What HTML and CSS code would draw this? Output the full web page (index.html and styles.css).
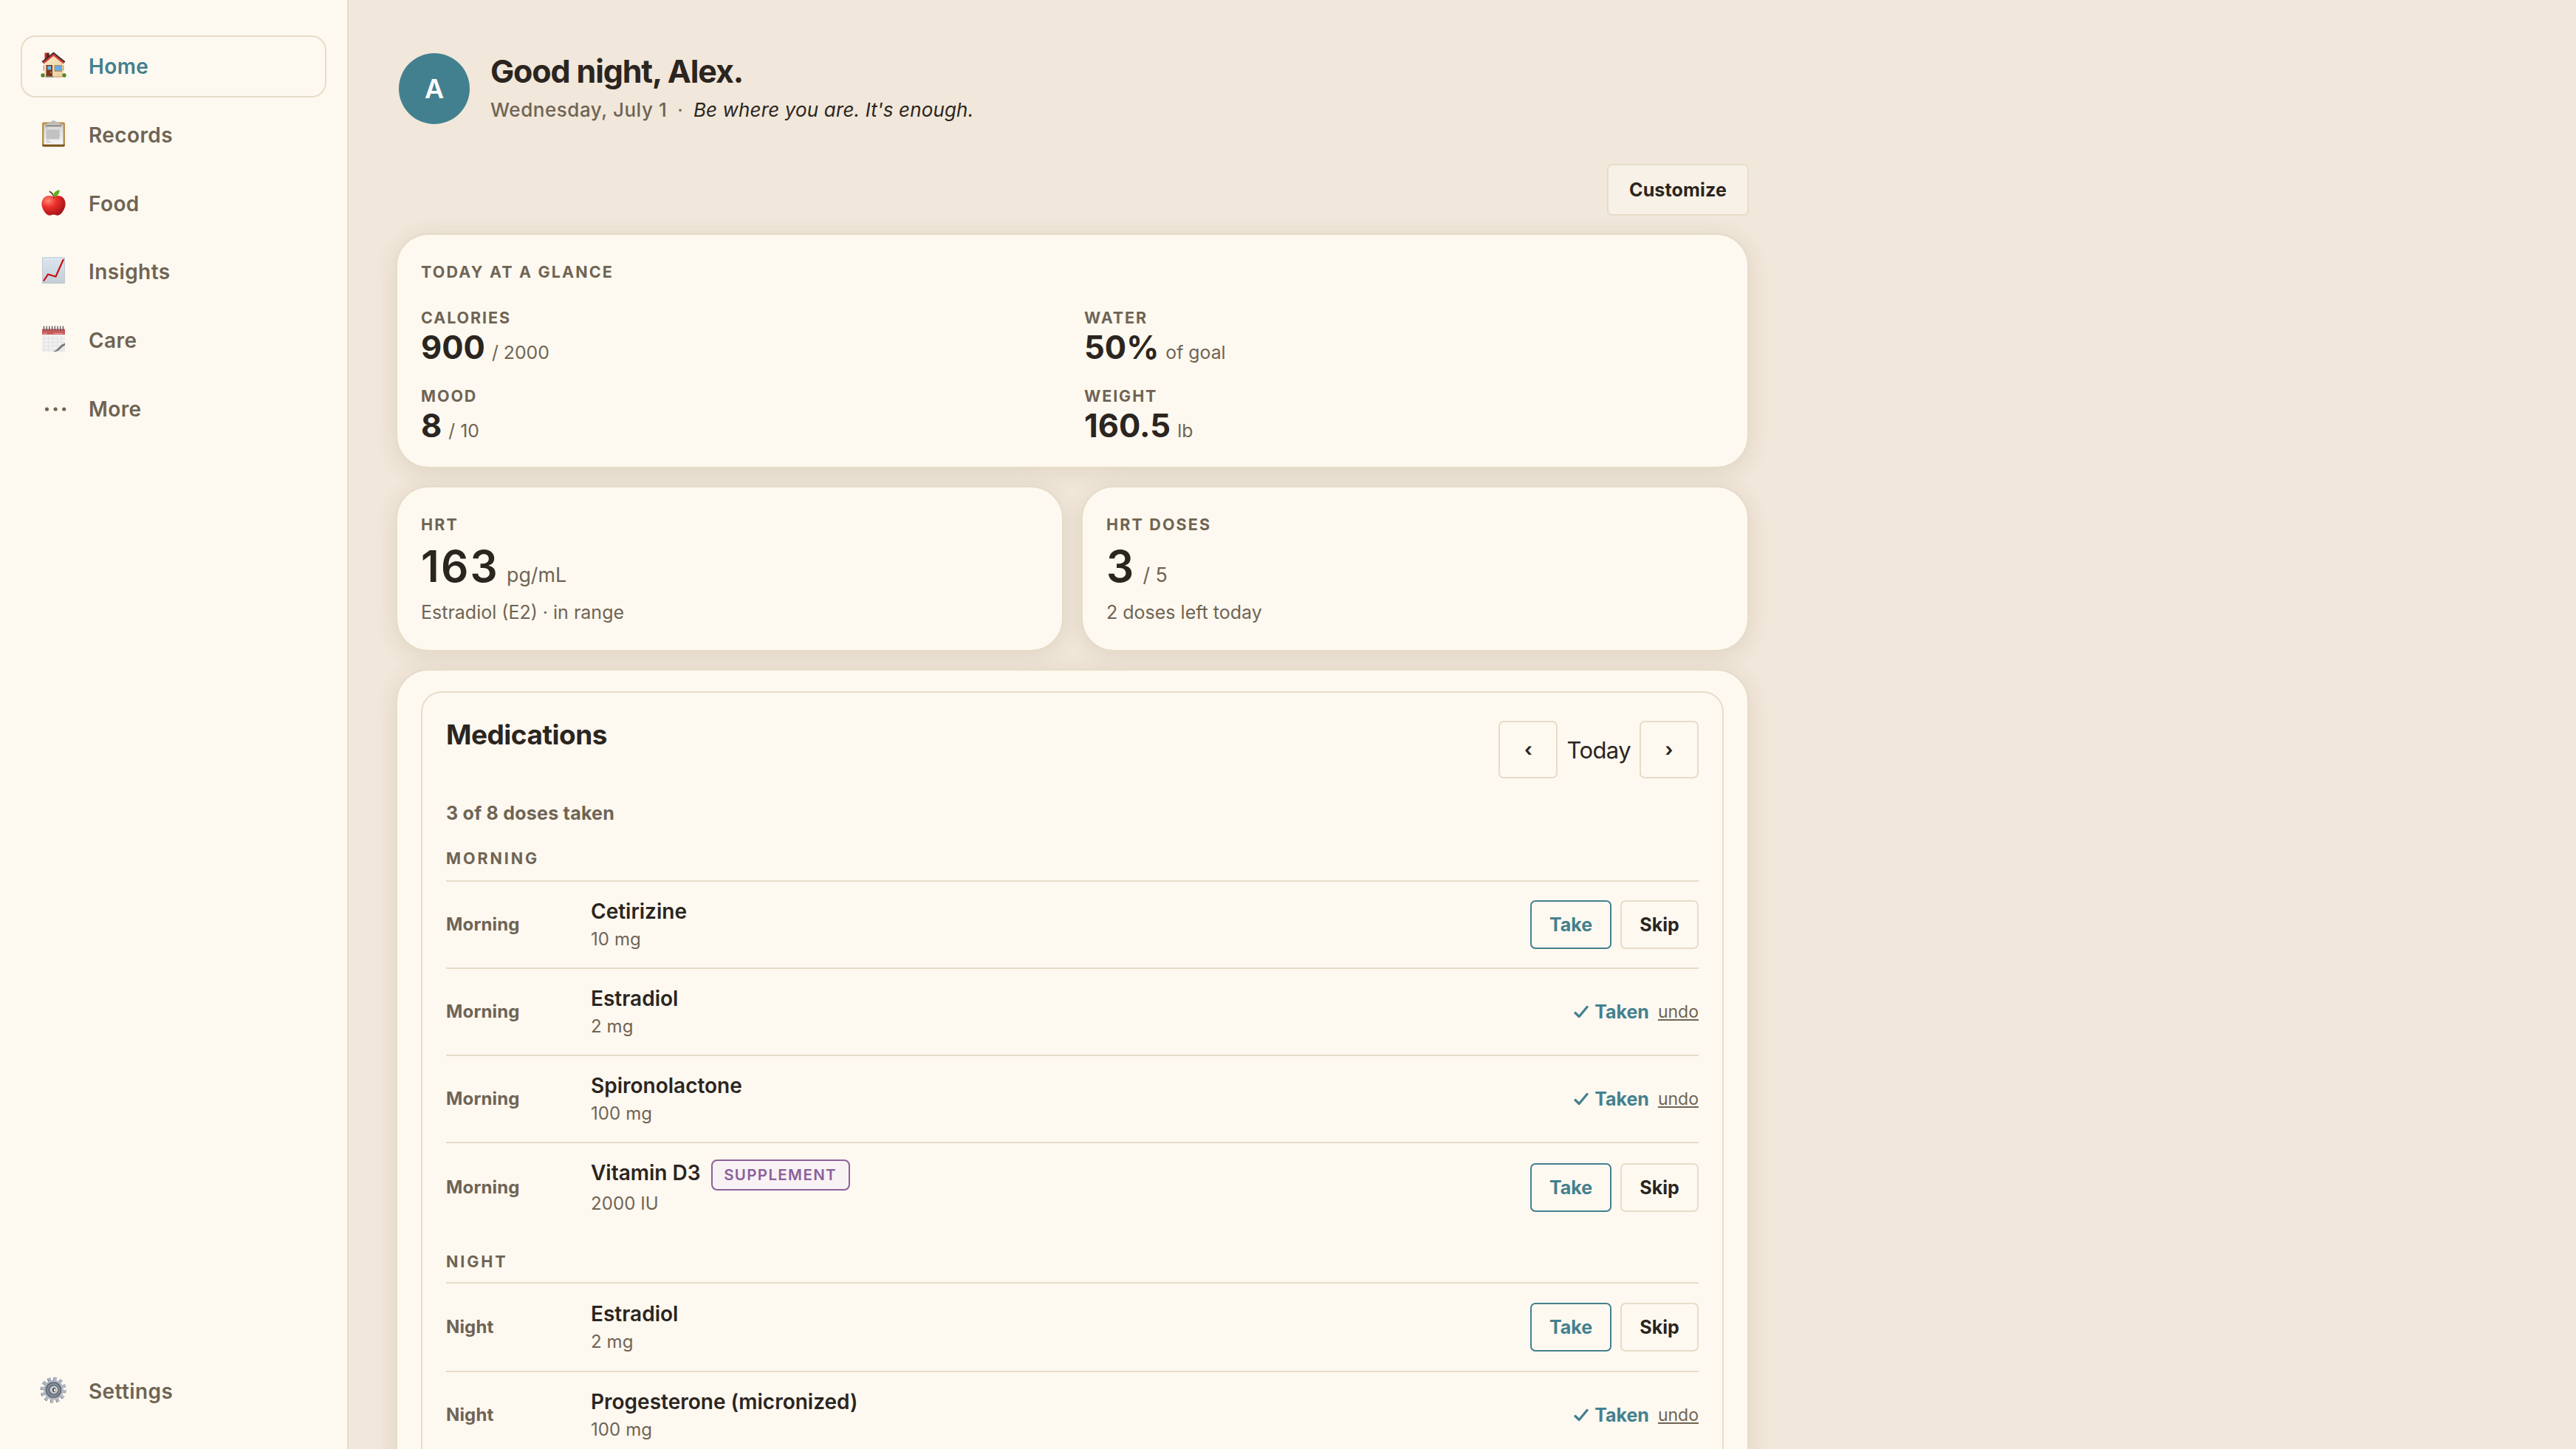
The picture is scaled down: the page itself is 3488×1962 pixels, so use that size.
FILE: index.html
```html
<!DOCTYPE html>
<html lang="en">
<head>
<meta charset="utf-8">
<title>Home</title>
<link rel="stylesheet" href="styles.css">
</head>
<body>
<div class="app">
  <nav class="sidebar">
    <a class="nav-item active">
      <svg class="icon" viewBox="0 0 36 36">
        <defs>
          <linearGradient id="wall" x1="0" y1="0" x2="1" y2="1"><stop offset="0" stop-color="#fbeccb"/><stop offset="1" stop-color="#e9cf9f"/></linearGradient>
        </defs>
        <path d="M6 1.500h6v8l-6 5z" fill="#b3342b"/><path d="M9 2h3v7l-3 2z" fill="#5a1d1b"/>
        <path d="M5 14 18 3l13 11v20H5z" fill="url(#wall)"/>
        <path d="M2.800 14.200 18 2l15.200 12.200" fill="none" stroke="#2c2a30" stroke-width="2.200"/>
        <path d="M4 15.500 18 4.300l14 11.200" fill="none" stroke="#d93a32" stroke-width="2.600"/>
        <path d="M8 18h8.500v16H8z" fill="#7a3420"/><path d="M9.800 19.500h5v5h-5z" fill="#6fb9ea"/>
        <circle cx="14.500" cy="28" r=".9" fill="#e2b04c"/>
        <path d="M19 18h10.500v9H19z" fill="#b98d62"/><path d="M20.300 19.200h8v6.500h-8z" fill="#62aee8"/>
        <path d="M4 18.500h1.500v7H4zM30.500 18.500H32v7h-1.500z" fill="#b9a68c"/>
        <circle cx="3.500" cy="32" r="2.700" fill="#55852c"/><circle cx="32.500" cy="32" r="2.700" fill="#55852c"/>
        <path d="M7 33h11v1.800H7z" fill="#8f8377"/><path d="M18 33.500h12v1.200H18z" fill="#c5a877"/>
      </svg>
      <span>Home</span>
    </a>
    <a class="nav-item">
      <svg class="icon" viewBox="0 0 36 36">
        <defs><linearGradient id="paper" x1="0" y1="0" x2="0" y2="1"><stop offset="0" stop-color="#d4d4d4"/><stop offset="1" stop-color="#f7f7f7"/></linearGradient></defs>
        <rect x="2.500" y="2.500" width="31" height="33" rx="2" fill="#bd8f4f"/>
        <path d="M3 32.500h30v1.500q0 1.500-1.500 1.500h-27Q3 35.500 3 34z" fill="#7a5320"/>
        <path d="M5 5.500h26v27H5z" fill="url(#paper)"/>
        <path d="M8 12.500h18v13H8z" fill="#c6c6c6"/>
        <path d="M7 10h4M8 14h19M8 17h18M8 20h19M8 23h18M8 27h4M8 29.500h6" stroke="#b9b9b9" stroke-width="1"/>
        <path d="M7 7.500q1-4 5-4h12q4 0 5 4z" fill="#c2c6ca"/><path d="M7 6.500h22v1.800H7z" fill="#85807a"/>
        <path d="M15 4a3 3 0 0 1 6 0" fill="none" stroke="#a9bccb" stroke-width="1.600"/>
      </svg>
      <span>Records</span>
    </a>
    <a class="nav-item">
      <svg class="icon" viewBox="0 0 36 36">
        <defs><radialGradient id="apple" cx=".28" cy=".25" r=".85"><stop offset="0" stop-color="#ff8a75"/><stop offset=".4" stop-color="#ee2f2c"/><stop offset="1" stop-color="#9c1013"/></radialGradient></defs>
        <path d="M18 10.500C13.500 8 7.500 8.500 4.300 12.500c-4 5.500-2.500 13 1.200 18 3 4.500 6 6 9.500 4.700 2-.8 4-.8 6 0 3.500 1.300 6.500-.2 9.500-4.700 3.700-5 5.200-12.500 1.200-18C28.500 8.500 22.500 8 18 10.500z" fill="url(#apple)"/>
        <path d="M13 3.500q4.500 2.500 5.500 8" fill="none" stroke="#5d3a22" stroke-width="1.700" stroke-linecap="round"/>
        <path d="M17.500 10.500C17.500 5 21 2 26 1c.5 5-3 9.500-8.500 9.500z" fill="#5fae1f"/>
      </svg>
      <span>Food</span>
    </a>
    <a class="nav-item">
      <svg class="icon" viewBox="0 0 36 36">
        <defs><linearGradient id="chart" x1="0" y1="0" x2="0" y2="1"><stop offset="0" stop-color="#dfe9f2"/><stop offset="1" stop-color="#c3cbd3"/></linearGradient></defs>
        <rect x="3" y=".8" width="30" height="34.700" fill="url(#chart)" stroke="#b4c0ca" stroke-width=".8"/>
        <path d="M8 1v34M13 1v34M18 1v34M23 1v34M28 1v34M3 6h30M3 11h30M3 16h30M3 21h30M3 26h30M3 31h30" stroke="#cbd9e6" stroke-width=".5"/>
        <path d="M4.500 32.500 10.500 23.500 21 26.500 31.500 3" fill="none" stroke="#c80d12" stroke-width="2.200"/>
      </svg>
      <span>Insights</span>
    </a>
    <a class="nav-item">
      <svg class="icon" viewBox="0 0 36 36">
        <path d="M2.500 4.500h31V25L22 35.500H2.500z" fill="#f1f0f0"/>
        <path d="M5 13v22M11 13v22M17 13v22M23 13v20M29 13v15M3 17.500h30M3 22.500h30M3 27.500h25M3 32.500h20" stroke="#dedddd" stroke-width=".7"/>
        <path d="M2.500 4.500h31V12h-31z" fill="#c95a5c"/>
        <path d="M4 10.500h5M18 10.500h12" stroke="#e7a6a5" stroke-width="1.200"/>
        <path d="M5 .5v6M8.700 .5v6M12.400 .5v6M16.100 .5v6M19.800 .5v6M23.500 .5v6M27.200 .5v6M30.900 .5v6" stroke="#44464d" stroke-width="1.200"/>
        <path d="M33.500 24.500q-3 1-5.500 2-1 4-4.500 6-3 2.500-7 3h17z" fill="#e9e8e8"/>
        <path d="M33.500 23.500q-5 2-7 4.500-4 5-9 7.300 6 .3 10-4.300 2-3 6-4.500z" fill="#77777a"/>
      </svg>
      <span>Care</span>
    </a>
    <a class="nav-item">
      <svg class="icon" viewBox="0 0 36 36"><g fill="#6f6454"><circle cx="9" cy="20" r="2.600"/><circle cx="20.600" cy="20" r="2.600"/><circle cx="32.200" cy="20" r="2.600"/></g></svg>
      <span>More</span>
    </a>
    <a class="nav-item settings">
      <svg class="icon" viewBox="0 0 36 36">
        <defs><linearGradient id="gear" x1="0" y1="0" x2="1" y2="1"><stop offset="0" stop-color="#a7b5c0"/><stop offset="1" stop-color="#b9b8c4"/></linearGradient></defs>
        <circle cx="17.300" cy="18.400" r="14.700" fill="none" stroke="#5c5d66" stroke-width="5" stroke-dasharray="3.600 4.100"/>
        <circle cx="18" cy="18" r="14.900" fill="none" stroke="url(#gear)" stroke-width="5.200" stroke-dasharray="3.800 4"/>
        <circle cx="18" cy="18" r="13.400" fill="url(#gear)"/>
        <circle cx="18" cy="18" r="10" fill="#84909a" stroke="#5d6670" stroke-width="1.600"/>
        <circle cx="18" cy="18" r="7.300" fill="#6d7077"/>
        <circle cx="18.500" cy="17.800" r="5.400" fill="#c7cdd6"/>
        <ellipse cx="18.800" cy="18" rx="2.300" ry="2.900" fill="#4a3a3a"/><ellipse cx="19.600" cy="18.200" rx="1.300" ry="2" fill="#f3ece4"/>
      </svg>
      <span>Settings</span>
    </a>
  </nav>

  <main class="main">
    <header class="hero">
      <div class="avatar">A</div>
      <div class="hero-text">
        <h1>Good night, Alex.</h1>
        <p><span class="date">Wednesday, July 1</span><span class="sep">·</span><em>Be where you are. It's enough.</em></p>
      </div>
    </header>

    <div class="toolbar"><button class="btn customize">Customize</button></div>

    <div class="cards">
      <section class="card glance">
        <h2 class="label wide">Today at a glance</h2>
        <div class="stats">
          <div class="stat"><div class="label">Calories</div><div class="value">900<small>/ 2000</small></div></div>
          <div class="stat"><div class="label">Water</div><div class="value">50%<small>of goal</small></div></div>
          <div class="stat"><div class="label">Mood</div><div class="value">8<small>/ 10</small></div></div>
          <div class="stat"><div class="label">Weight</div><div class="value">160.5<small>lb</small></div></div>
        </div>
      </section>

      <section class="card metric">
        <h2 class="label wide">HRT</h2>
        <div class="big">163<small>pg/mL</small></div>
        <p class="note">Estradiol (E2) · in range</p>
      </section>
      <section class="card metric">
        <h2 class="label wide">HRT doses</h2>
        <div class="big">3<small>/ 5</small></div>
        <p class="note">2 doses left today</p>
      </section>

      <section class="card meds">
        <div class="panel">
          <div class="panel-head">
            <h2>Medications</h2>
            <div class="day-nav">
              <button class="btn step">‹</button><span>Today</span><button class="btn step">›</button>
            </div>
          </div>
          <p class="progress">3 of 8 doses taken</p>

          <h3 class="group">Morning</h3>
          <div class="row">
            <span class="slot">Morning</span>
            <div><div class="name">Cetirizine</div><div class="dose">10 mg</div></div>
            <div class="actions"><button class="btn take">Take</button><button class="btn skip">Skip</button></div>
          </div>
          <div class="row">
            <span class="slot">Morning</span>
            <div><div class="name">Estradiol</div><div class="dose">2 mg</div></div>
            <div class="actions done"><svg class="check" viewBox="0 0 20 20"><path d="M2 11.500 7.200 16.500 18 3.500"/></svg><span class="taken">Taken</span><a class="undo">undo</a></div>
          </div>
          <div class="row">
            <span class="slot">Morning</span>
            <div><div class="name">Spironolactone</div><div class="dose">100 mg</div></div>
            <div class="actions done"><svg class="check" viewBox="0 0 20 20"><path d="M2 11.500 7.200 16.500 18 3.500"/></svg><span class="taken">Taken</span><a class="undo">undo</a></div>
          </div>
          <div class="row">
            <span class="slot">Morning</span>
            <div><div class="name">Vitamin D3<span class="badge">Supplement</span></div><div class="dose">2000 IU</div></div>
            <div class="actions"><button class="btn take">Take</button><button class="btn skip">Skip</button></div>
          </div>

          <h3 class="group later">Night</h3>
          <div class="row tall">
            <span class="slot">Night</span>
            <div><div class="name">Estradiol</div><div class="dose">2 mg</div></div>
            <div class="actions"><button class="btn take">Take</button><button class="btn skip">Skip</button></div>
          </div>
          <div class="row">
            <span class="slot">Night</span>
            <div><div class="name">Progesterone (micronized)</div><div class="dose">100 mg</div></div>
            <div class="actions done"><svg class="check" viewBox="0 0 20 20"><path d="M2 11.500 7.200 16.500 18 3.500"/></svg><span class="taken">Taken</span><a class="undo">undo</a></div>
          </div>
        </div>
      </section>
    </div>
  </main>
</div>
</body>
</html>
```
FILE: styles.css
```css
:root {
  --bg: #f1e7da;
  --surface: #fef9f0;
  --line: #e6dcc8;
  --ink: #2b2520;
  --muted: #6f6454;
  --teal: #43808f;
  --purple: #8a6199;
}

* { box-sizing: border-box; margin: 0; padding: 0; }

body {
  background: var(--bg);
  color: var(--ink);
  font-family: Inter, "Liberation Sans", sans-serif;
  overflow: hidden;
}

.app { display: flex; height: 1962px; overflow: hidden; }

/* Sidebar */
.sidebar {
  width: 472px;
  flex: none;
  padding: 48px 28px 36px;
  border-right: 2px solid var(--line);
  background: var(--surface);
  display: flex;
  flex-direction: column;
  gap: 8.8px;
}
.nav-item {
  height: 84px;
  padding: 0 26px 0 24px;
  border: 2px solid transparent;
  border-radius: 20px;
  display: flex;
  align-items: center;
  gap: 29px;
  color: var(--muted);
  font-size: 28px;
  font-weight: 600;
  letter-spacing: 0.400px;
}
.nav-item.active { border-color: var(--line); color: var(--teal); }
.nav-item.settings { margin-top: auto; }
.icon { width: 37px; height: 36px; margin-top: -4px; flex: none; }

/* Main column */
.main { width: 1960px; flex: none; padding: 72px 64px 0; }

.hero { display: flex; gap: 28px; padding-left: 4px; height: 96px; }
.avatar {
  width: 96px;
  height: 96px;
  border-radius: 50%;
  background: var(--teal);
  color: #fff;
  font-size: 36px;
  font-weight: 600;
  line-height: 97px;
  text-align: center;
}
.hero h1 { font-size: 43px; font-weight: 700; line-height: 48px; letter-spacing: -1.150px; }
.hero p { margin-top: 9px; font-size: 26px; line-height: 40px; letter-spacing: 0.150px; white-space: nowrap; }
.date { color: var(--muted); font-weight: 550; letter-spacing: 0.550px; }
.sep { color: var(--muted); margin: 0 14px; }

.toolbar { display: flex; justify-content: flex-end; margin: 54px 0 24px; }

.btn {
  border: 2px solid var(--line);
  border-radius: 7px;
  background: var(--surface);
  color: var(--ink);
  font-family: inherit;
  font-size: 25px;
  font-weight: 650;
}
.customize { width: 192px; height: 70px; background: #f8f1e7; letter-spacing: 0.150px; }

/* Cards */
.cards { display: grid; grid-template-columns: 1fr 1fr; gap: 24px; }
.card {
  border: 2px solid var(--line);
  border-radius: 44px;
  background: var(--surface);
  box-shadow: 0 5px 30px rgba(100, 76, 40, 0.12);
  padding: 28px 32px 32px;
}
.glance, .meds { grid-column: 1 / -1; }

.label {
  color: var(--muted);
  font-size: 21.500px;
  font-weight: 650;
  letter-spacing: 1.900px;
  line-height: 32px;
  text-transform: uppercase;
}
.label.wide { line-height: 44px; letter-spacing: 2.150px; }

.stats { display: grid; grid-template-columns: 1fr 1fr; gap: 26px 32px; margin-top: 24px; }
.value { font-size: 43.500px; font-weight: 700; line-height: 48px; height: 48px; }
small { color: var(--muted); font-weight: 400; line-height: 1; letter-spacing: 0; }
.value small { font-size: 24.800px; margin-left: 9px; }

.metric { padding-bottom: 31px; }
.big { font-size: 58.500px; font-weight: 600; line-height: 70px; height: 70px; letter-spacing: 2.200px; }
.big small { font-size: 26.800px; margin-left: 10px; letter-spacing: 0; }
.note { margin-top: 7px; color: var(--muted); font-size: 25px; line-height: 40px; }

/* Medications */
.panel { border: 2px solid var(--line); border-radius: 28px; padding: 38px 32px; background: #fdf8f0; }
.panel-head { display: flex; justify-content: space-between; }
.panel-head h2 { font-size: 37px; font-weight: 700; line-height: 38px; letter-spacing: -0.500px; }
.day-nav { display: flex; align-items: center; gap: 12px; font-size: 31px; letter-spacing: -0.600px; }
.step { width: 80px; height: 78px; }
.progress { margin-top: 27px; color: var(--muted); font-size: 25px; font-weight: 650; line-height: 40px; letter-spacing: 0.250px; }

.group {
  margin: 25px 0 14px;
  color: var(--muted);
  font-size: 21.500px;
  font-weight: 700;
  letter-spacing: 2.900px;
  line-height: 32px;
  text-transform: uppercase;
}
.group.later { margin: 24px 0 12px; }

.row {
  display: grid;
  grid-template-columns: 196px 1fr auto;
  align-items: center;
  border-top: 2px solid var(--line);
  padding: 20px 0;
}
.row.tall { padding: 21px 0; }
.slot { margin-top: -2px; color: var(--muted); font-size: 24px; font-weight: 650; letter-spacing: 0.150px; }
.name { display: flex; align-items: flex-start; font-size: 28px; font-weight: 600; line-height: 40px; }
.dose { color: var(--muted); font-size: 24px; line-height: 36px; letter-spacing: 0.100px; }
.badge {
  margin: 2px 0 0 14px;
  height: 42px;
  width: 188px;
  border: 2px solid var(--purple);
  border-radius: 8px;
  background: #f8f2f5;
  color: var(--purple);
  font-size: 20.500px;
  letter-spacing: 1.350px;
  line-height: 38px;
  text-align: center;
  text-transform: uppercase;
}
.actions { display: flex; align-items: center; gap: 12px; margin-top: -1px; }
.take { width: 110px; height: 66px; border-color: var(--teal); color: var(--teal); }
.skip { width: 106px; height: 66px; }
.check { width: 20px; height: 20px; margin-right: -4px; fill: none; stroke: var(--teal); stroke-width: 3.200; stroke-linecap: round; stroke-linejoin: round; }
.taken { color: var(--teal); font-size: 25px; font-weight: 650; }
.undo { color: var(--muted); font-size: 23px; text-decoration: underline; }
```
